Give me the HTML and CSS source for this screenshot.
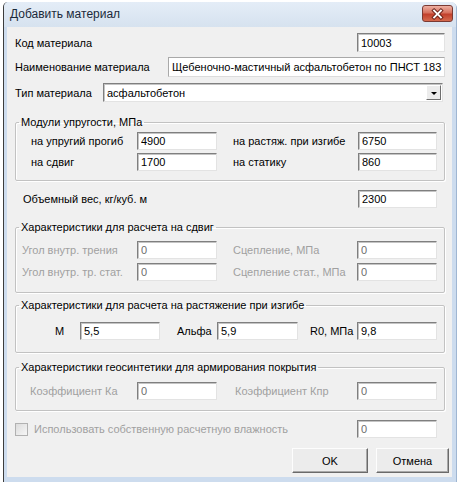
FILE: index.html
```html
<!DOCTYPE html>
<html lang="ru">
<head>
  <meta charset="UTF-8">
  <title>Добавить материал</title>
  <link rel="stylesheet" href="styles.css">
</head>
<body>
  <div class="window">
    <div class="titlebar">
      <span class="title">Добавить материал</span>
      <span class="close-btn">
        <svg width="30" height="16" viewBox="0 0 30 16">
          <path d="M11.5 4.5 L18.5 11.5 M18.5 4.5 L11.5 11.5" stroke="#6a2219" stroke-width="4" stroke-linecap="square"/>
          <path d="M11.5 4.5 L18.5 11.5 M18.5 4.5 L11.5 11.5" stroke="#fff" stroke-width="2" stroke-linecap="square"/>
        </svg>
      </span>
    </div>
    <div class="client">
      <div class="row row-code">
        <span>Код материала</span>
        <input class="edit edit-code" type="text" value="10003">
      </div>
      <div class="row row-name">
        <span>Наименование материала</span>
        <input class="edit edit-name" type="text" value="Щебеночно-мастичный асфальтобетон по ПНСТ 183">
      </div>
      <div class="row row-type">
        <span class="lbl-type">Тип материала</span>
        <div class="combo">
          <span class="combo-text">асфальтобетон</span>
          <span class="combo-btn"><span class="arrow"></span></span>
        </div>
      </div>

      <fieldset class="group group-mod">
        <legend>Модули упругости, МПа</legend>
        <div class="grid grid-mod">
          <span>на упругий прогиб</span>
          <input class="edit w80" type="text" value="4900">
          <span>на растяж. при изгибе</span>
          <input class="edit w79" type="text" value="6750">
          <span>на сдвиг</span>
          <input class="edit w80" type="text" value="1700">
          <span>на статику</span>
          <input class="edit w79" type="text" value="860">
        </div>
      </fieldset>

      <div class="row row-weight">
        <span>Объемный вес, кг/куб. м</span>
        <input class="edit w79" type="text" value="2300">
      </div>

      <fieldset class="group group-shear">
        <legend>Характеристики для расчета на сдвиг</legend>
        <div class="grid grid-shear disabled">
          <span>Угол внутр. трения</span>
          <input class="edit w80" type="text" value="0" disabled>
          <span>Сцепление, МПа</span>
          <input class="edit w80" type="text" value="0" disabled>
          <span>Угол внутр. тр. стат.</span>
          <input class="edit w80" type="text" value="0" disabled>
          <span>Сцепление стат., МПа</span>
          <input class="edit w80" type="text" value="0" disabled>
        </div>
      </fieldset>

      <fieldset class="group group-bend">
        <legend>Характеристики для расчета на растяжение при изгибе</legend>
        <div class="row row-bend">
          <span class="lbl-m">М</span>
          <input class="edit w80" type="text" value="5,5">
          <span class="lbl-alpha">Альфа</span>
          <input class="edit w81" type="text" value="5,9">
          <span class="lbl-r0">R0, МПа</span>
          <input class="edit w80" type="text" value="9,8">
        </div>
      </fieldset>

      <fieldset class="group group-geo">
        <legend>Характеристики геосинтетики для армирования покрытия</legend>
        <div class="grid grid-geo disabled">
          <span>Коэффициент Ка</span>
          <input class="edit w80" type="text" value="0" disabled>
          <span>Коэффициент Кпр</span>
          <input class="edit w80" type="text" value="0" disabled>
        </div>
      </fieldset>

      <div class="row row-check disabled">
        <input class="check" type="checkbox" disabled>
        <span class="lbl-check">Использовать собственную расчетную влажность</span>
        <input class="edit w80 push" type="text" value="0" disabled>
      </div>

      <div class="row row-buttons">
        <button class="btn btn-ok">OK</button>
        <button class="btn btn-cancel">Отмена</button>
      </div>
    </div>
  </div>
</body>
</html>
```

FILE: styles.css
```css
body {
    margin: 0;
    background: #fff;
    font-family: "Liberation Sans", Arial, sans-serif;
    font-size: 11px;
    color: #000;
}
.window {
    box-sizing: border-box;
    width: 453px;
    margin: 2px 0 0 3px;
    padding: 0 4px 5px 3px;
    background: #cddcee;
    border-left: 1px solid #3c3c3c;
    border-radius: 5px 5px 0 0;
    box-shadow: 1px 1px 0 #9fb6d2;
}
.titlebar {
    height: 25px;
    display: flex;
    align-items: center;
    justify-content: space-between;
    padding-left: 3px;
    margin-left: -3px;
    margin-right: -4px;
    background: linear-gradient(#e4edf7, #d6e2ef);
    border-radius: 5px 5px 0 0;
}
.title {
    font-size: 12px;
    color: #1b2a3a;
    padding-left: 3px;
    padding-bottom: 2px;
}
.close-btn {
    box-sizing: border-box;
    width: 31px;
    height: 17px;
    margin-right: 3px;
    margin-top: -2px;
    border: 1px solid #7b3a33;
    border-radius: 3px;
    background: linear-gradient(#eeb0a2, #d7715e 45%, #c2402c 55%, #d56a4e);
    display: flex;
    align-items: center;
    justify-content: center;
}
.close-btn svg {
    display: block;
}
.client {
    height: 450px;
    background: #f0f0f0;
    overflow: hidden;
}
.row {
    display: flex;
    align-items: center;
}
.edit {
    box-sizing: border-box;
    height: 18px;
    margin: 0;
    padding: 0 0 0 3px;
    font-family: "Liberation Sans", Arial, sans-serif;
    font-size: 11px;
    color: #000;
    background: #fff;
    border: 1px solid;
    border-color: #7f7f7f #e3e3e3 #e3e3e3 #7f7f7f;
    box-shadow: inset 1px 1px 0 #c4c4c4;
    border-radius: 0;
    outline: none;
}
.edit:disabled {
    color: #6d6d6d;
    background: #fff;
}
.w79 { width: 79px; }
.w80 { width: 80px; }
.w81 { width: 81px; }

/* top rows */
.row-code {
    margin: 6px 7px 0 8px;
    height: 19px;
    justify-content: space-between;
}
.edit-code {
    width: 88px;
    height: 19px;
}
.row-name {
    margin: 5px 7px 0 8px;
    height: 20px;
    justify-content: space-between;
}
.edit-name {
    width: 277px;
    height: 20px;
    background: #fff;
    border-color: #a9a9a9 #dcdcdc #dcdcdc #a9a9a9;
    box-shadow: none;
}
.row-type {
    margin: 6px 9px 0 8px;
    height: 19px;
}
.lbl-type {
    width: 88px;
}
.combo {
    box-sizing: border-box;
    flex: 1;
    height: 19px;
    display: flex;
    align-items: center;
    background: #fff;
    border: 1px solid;
    border-color: #7f7f7f #e3e3e3 #e3e3e3 #7f7f7f;
    box-shadow: inset 1px 1px 0 #c4c4c4;
}
.combo-text {
    flex: 1;
    padding-left: 3px;
}
.combo-btn {
    box-sizing: border-box;
    width: 15px;
    height: 15px;
    margin-right: 1px;
    background: #ececec;
    border: 1px solid;
    border-color: #fff #6e6e6e #6e6e6e #fff;
    display: flex;
    align-items: center;
    justify-content: center;
}
.arrow {
    width: 0;
    height: 0;
    border-left: 3px solid transparent;
    border-right: 3px solid transparent;
    border-top: 3px solid #000;
    margin-top: 1px;
}

/* group boxes */
.group {
    margin: 0 7px 0 8px;
    padding: 0;
    min-width: 0;
    border: 1px solid #c2c2c2;
    border-radius: 2px;
    box-shadow: inset 1px 1px 0 #fff, 1px 1px 0 #fff;
}
.group legend {
    padding: 0 2px;
    margin-left: 3px;
    line-height: 14px;
    color: #000;
}
.grid {
    display: grid;
    grid-auto-rows: 18px;
    align-items: center;
}
.disabled span {
    color: #a0a0a0;
}
.group-mod {
    margin-top: 13px;
}
.grid-mod {
    grid-template-columns: 106px 96px 125px 79px;
    row-gap: 3px;
    padding: 3px 0 9px 15px;
}
.row-weight {
    margin: 9px 15px 0 16px;
    height: 18px;
    justify-content: space-between;
}
.group-shear {
    margin-top: 12px;
}
.grid-shear {
    grid-template-columns: 115px 96px 124px 80px;
    row-gap: 4px;
    padding: 7px 0 11px 6px;
}
.group-bend {
    margin-top: 5px;
}
.row-bend {
    height: 18px;
    padding: 10px 0 12px 39px;
}
.lbl-m {
    width: 25px;
}
.lbl-alpha {
    width: 40px;
    margin-left: 17px;
}
.lbl-r0 {
    width: 47px;
    margin-left: 12px;
}
.group-geo {
    margin-top: 7px;
}
.grid-geo {
    grid-template-columns: 107px 98px 122px 80px;
    padding: 8px 0 10px 14px;
}
.row-check {
    margin: 9px 15px 0 8px;
    height: 18px;
}
.check {
    appearance: none;
    box-sizing: border-box;
    width: 13px;
    height: 13px;
    margin: 0;
    border: 1px solid #b1b1b1;
    background: linear-gradient(135deg, #dcdcdc, #f6f6f6);
}
.lbl-check {
    margin-left: 6px;
}
.push {
    margin-left: auto;
}
.row-buttons {
    margin: 10px 3px 0 0;
    height: 25px;
    justify-content: flex-end;
    gap: 8px;
}
.btn {
    box-sizing: border-box;
    height: 25px;
    margin: 0;
    padding: 0;
    font-family: "Liberation Sans", Arial, sans-serif;
    font-size: 11px;
    color: #000;
    background: #ececec;
    border: 1px solid;
    border-color: #fdfdfd #6a6a6a #6a6a6a #fdfdfd;
    box-shadow: inset -1px -1px 0 #a8a8a8;
    border-radius: 0;
}
.btn-ok {
    width: 76px;
}
.btn-cancel {
    width: 73px;
}
```
